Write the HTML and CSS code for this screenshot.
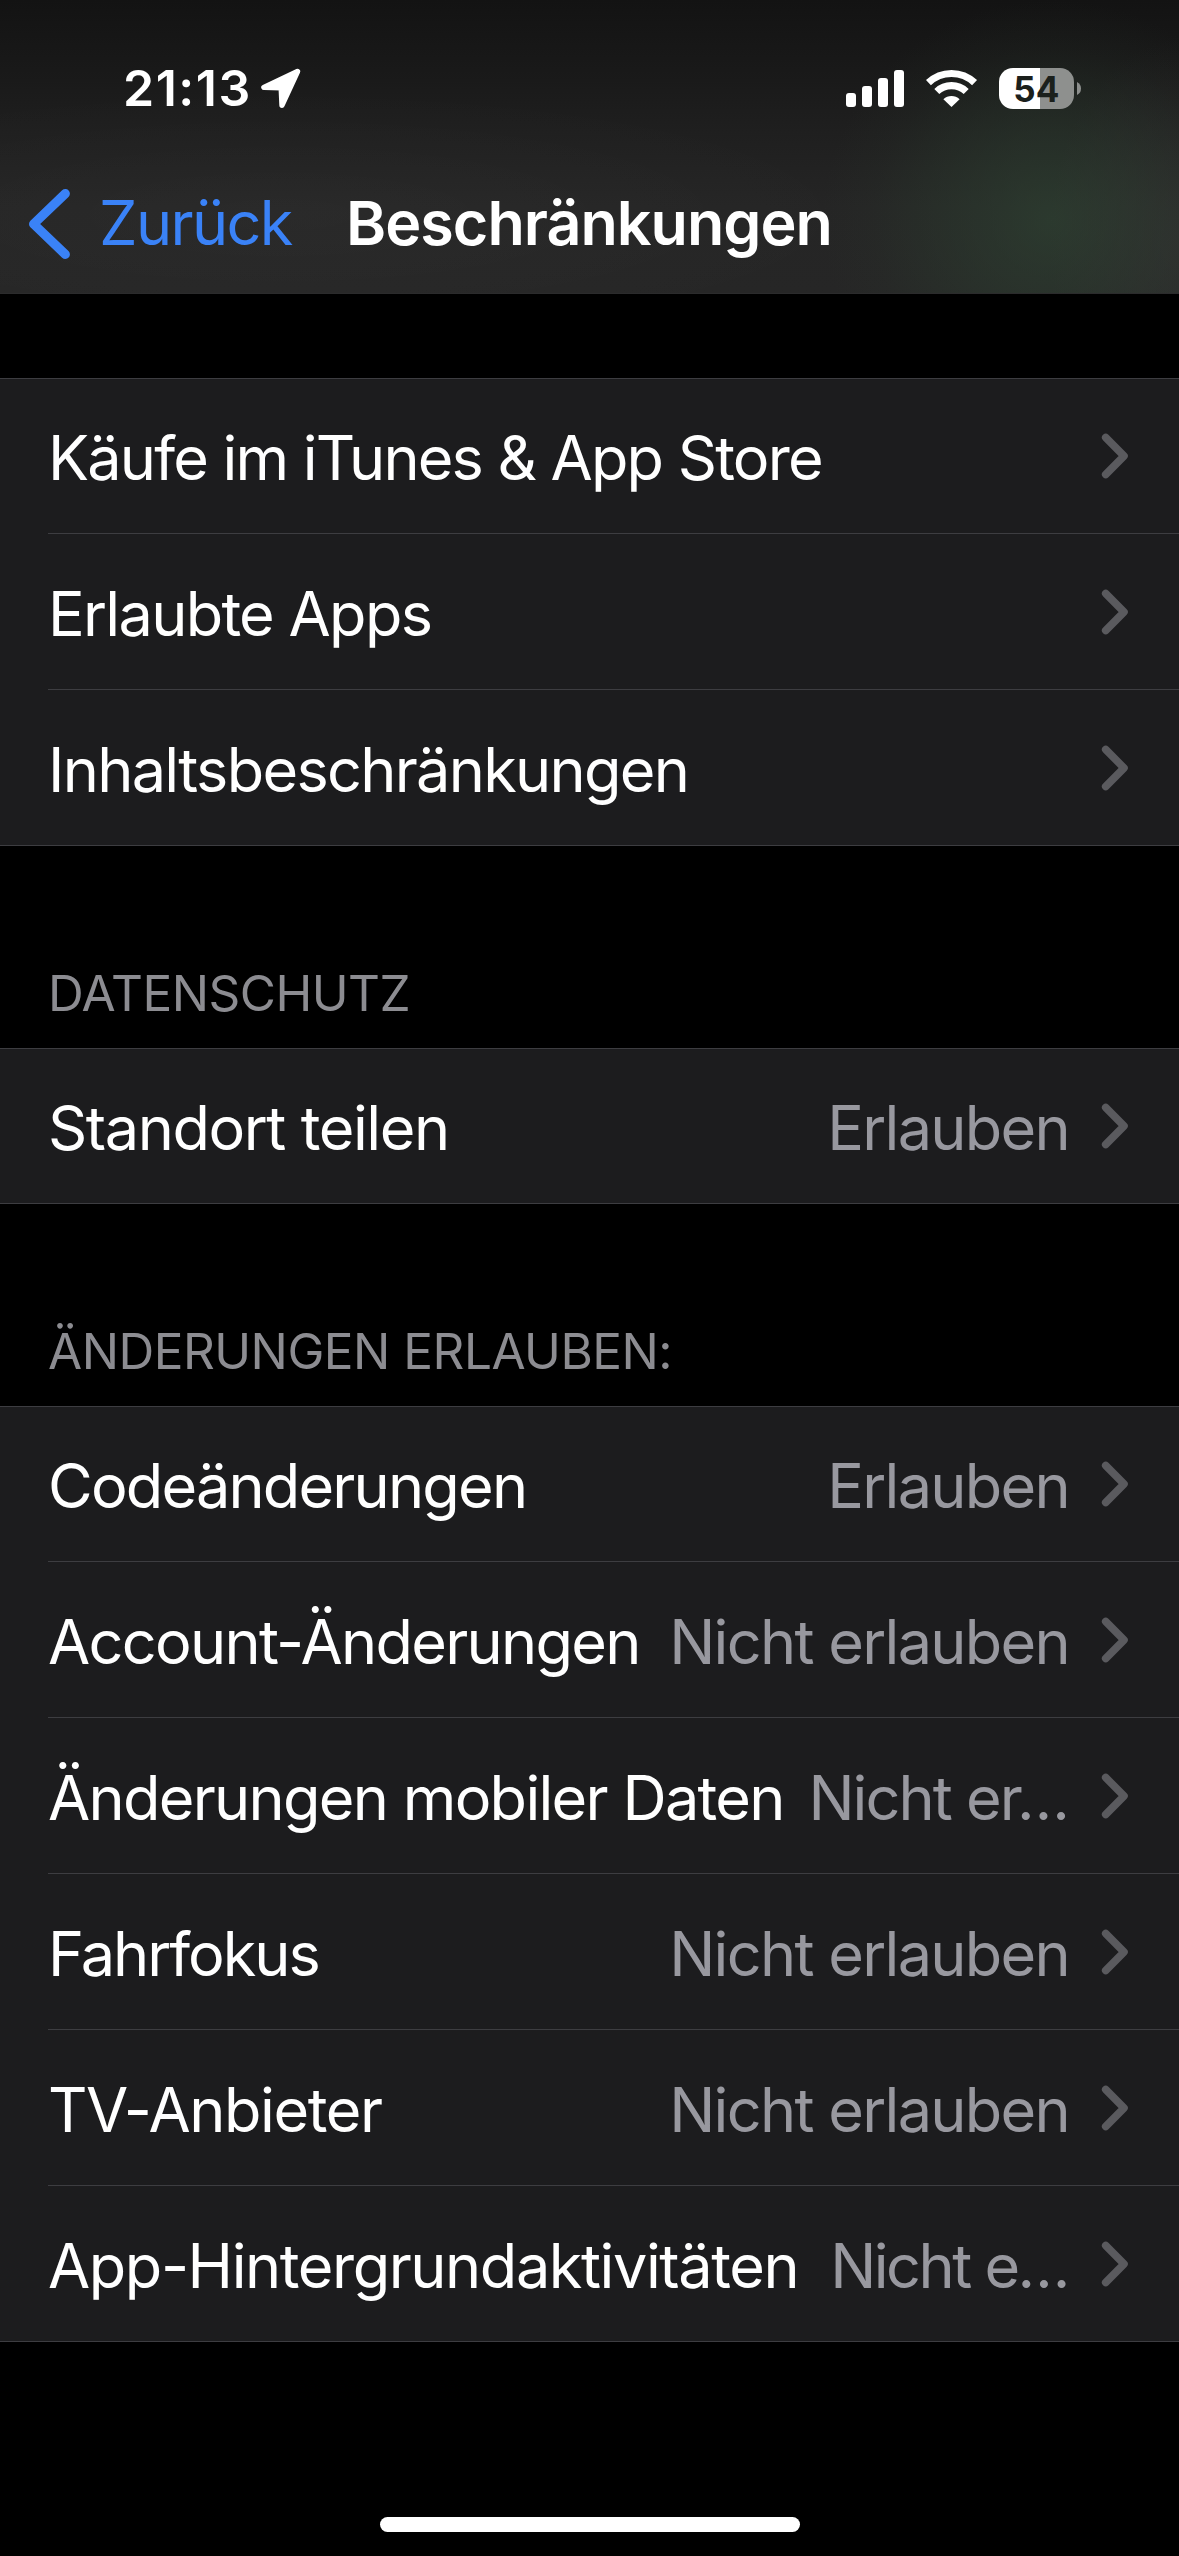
FILE: index.html
```html
<!DOCTYPE html>
<html lang="de">
<head>
<meta charset="utf-8">
<title>Beschränkungen</title>
<link rel="stylesheet" href="styles.css">
</head>
<body>
<svg class="defs" aria-hidden="true">
  <symbol id="chevron" viewBox="0 0 30 48">
    <path d="M5.7 5.5 24 24 5.7 42.5" fill="none" stroke="currentColor" stroke-width="7.6" stroke-linecap="round" stroke-linejoin="round"/>
  </symbol>
</svg>
<header class="header">
  <div class="status">
    <span class="time">21:13</span>
    <svg class="location" width="42" height="42" viewBox="0 0 42 42"><path d="M37.5 3.5 3.9 19.4 21.2 19.8 22 37.2Z" fill="#fff" stroke="#fff" stroke-width="5.4" stroke-linejoin="round"/></svg>
    <div class="indicators">
      <div class="signal"><i class="bar bar-1"></i><i class="bar bar-2"></i><i class="bar bar-3"></i><i class="bar bar-4"></i></div>
      <svg class="wifi" width="52" height="39" viewBox="0.5 0 52 39">
        <g fill="none" stroke="#fff" stroke-width="7.2"><path d="M2.95 13.7A33.5 33.5 0 0 1 49.05 13.7"/><path d="M11.3 22.5A21.4 21.4 0 0 1 40.7 22.5"/></g>
        <path d="M26 38 17.9 30.2A12 12 0 0 1 34.1 30.2Z" fill="#fff"/>
      </svg>
      <div class="battery"><span class="level">54</span></div>
      <svg class="nub" width="4" height="13" viewBox="0 0 4 13"><path d="M0 0Q4 2 4 6.5T0 13Z" fill="#8d8f8d"/></svg>
    </div>
  </div>
  <nav class="nav">
    <svg class="back" width="48" height="76" viewBox="0 0 48 76"><path d="M41.3 7.6 9.6 38 41.3 68.4" fill="none" stroke="currentColor" stroke-width="9.2" stroke-linecap="round" stroke-linejoin="round"/></svg>
    <span class="back-label">Zurück</span>
    <h1 class="title">Beschränkungen</h1>
  </nav>
</header>
<main class="content">
  <ul class="group">
    <li class="row"><span class="label snug">Käufe im iTunes &amp; App Store</span><svg class="chevron"><use href="#chevron"/></svg></li>
    <li class="row"><span class="label">Erlaubte Apps</span><svg class="chevron"><use href="#chevron"/></svg></li>
    <li class="row"><span class="label">Inhaltsbeschränkungen</span><svg class="chevron"><use href="#chevron"/></svg></li>
  </ul>
  <h2 class="caption">DATENSCHUTZ</h2>
  <ul class="group">
    <li class="row"><span class="label loose">Standort teilen</span><span class="value">Erlauben</span><svg class="chevron"><use href="#chevron"/></svg></li>
  </ul>
  <h2 class="caption">ÄNDERUNGEN ERLAUBEN:</h2>
  <ul class="group">
    <li class="row"><span class="label snug">Codeänderungen</span><span class="value">Erlauben</span><svg class="chevron"><use href="#chevron"/></svg></li>
    <li class="row"><span class="label">Account-Änderungen</span><span class="value">Nicht erlauben</span><svg class="chevron"><use href="#chevron"/></svg></li>
    <li class="row"><span class="label">Änderungen mobiler Daten</span><span class="value cut">Nicht er…</span><svg class="chevron"><use href="#chevron"/></svg></li>
    <li class="row"><span class="label tight">Fahrfokus</span><span class="value">Nicht erlauben</span><svg class="chevron"><use href="#chevron"/></svg></li>
    <li class="row"><span class="label loose">TV-Anbieter</span><span class="value">Nicht erlauben</span><svg class="chevron"><use href="#chevron"/></svg></li>
    <li class="row"><span class="label loose">App-Hintergrundaktivitäten</span><span class="value cut-short">Nicht e…</span><svg class="chevron"><use href="#chevron"/></svg></li>
  </ul>
</main>
<footer class="footer"><div class="home-bar"></div></footer>
</body>
</html>
```
FILE: styles.css
```css
* { box-sizing: border-box; margin: 0; padding: 0; }

body {
  width: 1179px;
  height: 2556px;
  display: flex;
  flex-direction: column;
  overflow: hidden;
  background: #000;
  color: #fff;
  font: 400 61.2px/74px Inter, "Liberation Sans", sans-serif;
  white-space: nowrap;
}

svg { flex: none; display: block; }
.defs { position: absolute; width: 0; height: 0; }

/* Header */
.header {
  height: 294px;
  flex: none;
  border-bottom: 1px solid #2b2b2c;
  background:
    radial-gradient(ellipse 230px 220px at 1052px 220px, rgba(48, 72, 53, .58), rgba(46, 66, 50, .4) 40%, rgba(44, 58, 46, .13) 78%, transparent),
    radial-gradient(ellipse 130px 200px at 1179px 240px, rgba(60, 54, 58, .4), transparent),
    radial-gradient(ellipse 600px 130px at 280px 215px, rgba(255, 255, 255, .025), transparent),
    linear-gradient(#131313, #191919 24%, #1f1f1f 45%, #252525 70%, #262626);
}

.status { height: 176px; display: flex; align-items: center; padding: 0 98px 0 123px; }
.time { font-size: 50px; font-weight: 600; letter-spacing: 1.5px; width: 137px; }
.location { margin-top: 1px; }
.indicators { margin-left: auto; display: flex; align-items: center; height: 41px; }

.signal { display: flex; align-items: flex-end; gap: 6px; height: 37px; }
.bar { width: 10px; border-radius: 3px; background: #fff; }
.bar-1 { height: 14px; }
.bar-2 { height: 21px; }
.bar-3 { height: 29px; }
.bar-4 { height: 37px; }

.wifi { margin-left: 22px; }

.battery {
  width: 75px;
  height: 41px;
  margin-left: 21px;
  border-radius: 14px;
  background: linear-gradient(90deg, #fff 41px, #8e908e 41px);
  color: #1b201c;
  text-align: center;
  line-height: 42px;
}
.level { display: block; font-size: 35px; font-weight: 700; letter-spacing: .2px; }
.nub { margin-left: 3px; }

.nav { height: 94px; display: flex; align-items: center; padding-left: 24px; }
.back, .back-label { color: #3a82f7; }
.back { margin-top: 1px; }
.back-label { width: 247px; margin-left: 27px; letter-spacing: -1.6px; }
.title { font-size: 61px; font-weight: 600; letter-spacing: -.98px; }

/* Settings groups */
.content { padding-top: 84px; }
.group { list-style: none; background: #1c1c1e; border: solid #3d3d41; border-width: 1px 0; }

.row {
  height: 156px;
  margin-left: 48px;
  padding-right: 49px;
  display: flex;
  align-items: center;
  border-bottom: 1px solid #3d3d41;
}
.row:first-child, .row:last-child { height: 155px; }
.row:last-child { border-bottom: 0; }
.row:only-child { height: 154px; }

.label, .value { padding-top: 5px; letter-spacing: -1.7px; }
.row:first-child .label, .row:first-child .value { padding-top: 3px; }
.label { margin-right: auto; }
.value { color: #98989f; }
.label.loose { letter-spacing: -1.42px; }
.label.snug { letter-spacing: -1.8px; }
.label.tight { letter-spacing: -2px; }
.value.cut { letter-spacing: -1.94px; margin-right: 1px; }
.value.cut-short { letter-spacing: -2.5px; margin-right: 1px; }

.chevron { width: 30px; height: 48px; margin-left: 31px; color: #5a5a5e; }

.caption {
  height: 202px;
  padding: 117px 0 0 48px;
  font-size: 49.5px;
  font-weight: 400;
  line-height: 60px;
  letter-spacing: -.5px;
  color: #8c8c91;
}

/* Home indicator */
.footer { margin-top: auto; padding-bottom: 24px; display: flex; justify-content: center; }
.home-bar { width: 420px; height: 15px; border-radius: 8px; background: #fff; }
```
